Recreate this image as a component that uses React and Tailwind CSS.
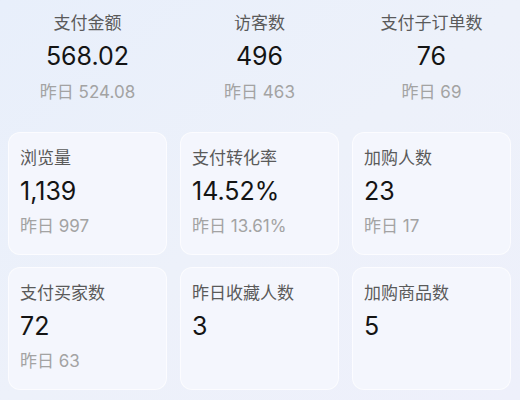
import React from "react";

const top = [
  { label: "支付金额", value: "568.02", prev: "昨日 524.08" },
  { label: "访客数", value: "496", prev: "昨日 463" },
  { label: "支付子订单数", value: "76", prev: "昨日 69" },
];

const cards = [
  { label: "浏览量", value: "1,139", prev: "昨日 997" },
  { label: "支付转化率", value: "14.52%", prev: "昨日 13.61%" },
  { label: "加购人数", value: "23", prev: "昨日 17" },
  { label: "支付买家数", value: "72", prev: "昨日 63" },
  { label: "昨日收藏人数", value: "3" },
  { label: "加购商品数", value: "5" },
];

const font = { fontFamily: 'Inter, "Noto Sans CJK SC", sans-serif' };

export default function App() {
  return (
    <div
      className="w-[520px] h-[400px] overflow-hidden bg-gradient-to-br from-[#e8effb] via-[#edf1fa] to-[#eef0fb]"
      style={font}
    >
      <div className="grid grid-cols-3 gap-[13px] pl-2 pr-[9px] pt-[11px]">
        {top.map((t) => (
          <div key={t.label} className="flex flex-col items-center">
            <div className="text-[17px] leading-[24px] text-[#5a5a5a]">{t.label}</div>
            <div className="mt-[5px] text-[25px] leading-[32px] text-[#141414]">{t.value}</div>
            <div className="mt-[8px] text-[17px] leading-[24px] text-[#a3a3a3]">{t.prev}</div>
          </div>
        ))}
      </div>
      <div className="mt-[28px] grid grid-cols-3 gap-x-[13px] gap-y-[12px] pl-2 pr-[9px]">
        {cards.map((c) => (
          <div
            key={c.label}
            className="h-[123px] rounded-[12px] bg-[#f4f6fd] border border-white/70 px-[11px] pt-[13px] flex flex-col"
          >
            <div className="text-[17px] leading-[24px] text-[#5a5a5a]">{c.label}</div>
            <div className="mt-[5px] text-[25px] leading-[32px] text-[#141414]">{c.value}</div>
            {c.prev && (
              <div className="mt-[7px] text-[17px] leading-[24px] text-[#a3a3a3]">{c.prev}</div>
            )}
          </div>
        ))}
      </div>
    </div>
  );
}
